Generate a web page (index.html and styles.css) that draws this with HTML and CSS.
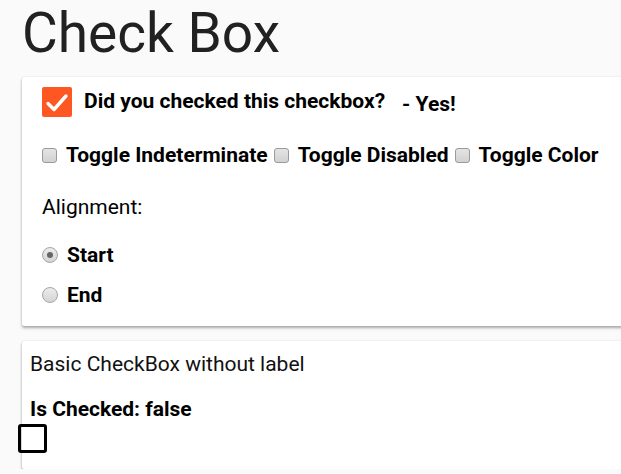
FILE: index.html
```html
<!DOCTYPE html>
<html>
<head>
<meta charset="utf-8">
<link rel="stylesheet" href="styles.css">
</head>
<body>
<h1 class="title">Check Box</h1>
<section class="card card-main">
  <div class="row-question">
    <span class="big-check">
      <svg viewBox="0 0 30 30" width="30" height="30"><polyline points="6,16.5 12,22.5 24,9" fill="none" stroke="#fff" stroke-width="3.4" stroke-linecap="round" stroke-linejoin="round"/></svg>
    </span>
    <span class="question">Did you checked this checkbox?</span>
    <span class="answer">- Yes!</span>
  </div>
  <div class="row-toggles">
    <span class="mini-box"></span><span class="toggle-label">Toggle Indeterminate</span>
    <span class="mini-box"></span><span class="toggle-label">Toggle Disabled</span>
    <span class="mini-box"></span><span class="toggle-label">Toggle Color</span>
  </div>
  <div class="align-label">Alignment:</div>
  <div class="radio-row radio-first"><span class="radio radio-on"></span><span class="radio-label">Start</span></div>
  <div class="radio-row radio-second"><span class="radio"></span><span class="radio-label">End</span></div>
</section>
<section class="card card-basic">
  <div class="basic-title">Basic CheckBox without label</div>
  <div class="basic-state">Is Checked: false</div>
  <span class="plain-box"></span>
</section>
</body>
</html>
```

FILE: styles.css
```css
html, body {
  margin: 0;
  padding: 0;
  background: #fafafa;
  font-family: Roboto, "Liberation Sans", sans-serif;
  overflow: hidden;
}
body {
  padding-left: 22px;
  width: 760px;
}
.title {
  margin: 0;
  font-size: 55px;
  font-weight: 400;
  line-height: 67px;
  color: #212121;
}
.card {
  background: #fff;
  box-shadow: 0 2px 3px rgba(0,0,0,0.32), 0 0 2px rgba(0,0,0,0.10);
  border-radius: 2px;
  box-sizing: border-box;
  width: 740px;
}
.card-main {
  margin-top: 10px;
  height: 249px;
  padding: 10px 20px 0 20px;
}
.row-question {
  display: flex;
  align-items: center;
  height: 30px;
}
.big-check {
  width: 30px;
  height: 30px;
  background: #ff5722;
  border-radius: 2px;
  display: block;
}
.big-check svg { display: block; }
.question {
  margin-left: 12px;
  font-size: 21px;
  font-weight: 700;
  color: #000;
  position: relative;
  top: -1px;
}
.answer {
  margin-left: 17px;
  font-size: 21px;
  font-weight: 700;
  color: #000;
  position: relative;
  top: 2px;
}
.row-toggles {
  display: flex;
  align-items: center;
  margin-top: 26px;
  height: 24px;
}
.mini-box {
  width: 13px;
  height: 13px;
  border: 1px solid #9a9a9a;
  border-radius: 3px;
  background: linear-gradient(#e4e4e4, #d2d2d2);
  margin-right: 9px;
}
.toggle-label {
  font-size: 21px;
  font-weight: 700;
  color: #000;
  margin-right: 6px;
}
.align-label {
  margin-top: 28px;
  font-size: 21px;
  line-height: 24px;
  color: #000;
}
.radio-row {
  display: flex;
  align-items: center;
  height: 24px;
}
.radio-first { margin-top: 24px; }
.radio-second { margin-top: 16px; }
.radio {
  width: 14px;
  height: 14px;
  border: 1px solid #a6a6a6;
  border-radius: 50%;
  background: linear-gradient(#ececec, #d4d4d4);
  margin-right: 9px;
  position: relative;
}
.radio-on::after {
  content: "";
  position: absolute;
  left: 4px;
  top: 4px;
  width: 6px;
  height: 6px;
  border-radius: 50%;
  background: #666;
}
.radio-label {
  font-size: 21px;
  font-weight: 700;
  color: #000;
}
.card-basic {
  margin-top: 15px;
  height: 128px;
  padding: 11px 8px 0 8px;
}
.basic-title {
  font-size: 21px;
  line-height: 24px;
  color: #111;
}
.basic-state {
  margin-top: 21px;
  font-size: 21px;
  line-height: 24px;
  font-weight: 700;
  color: #000;
}
.plain-box {
  display: block;
  margin-top: 3px;
  margin-left: -12px;
  width: 23px;
  height: 23px;
  border: 3px solid #000;
  border-radius: 3px;
}
```
